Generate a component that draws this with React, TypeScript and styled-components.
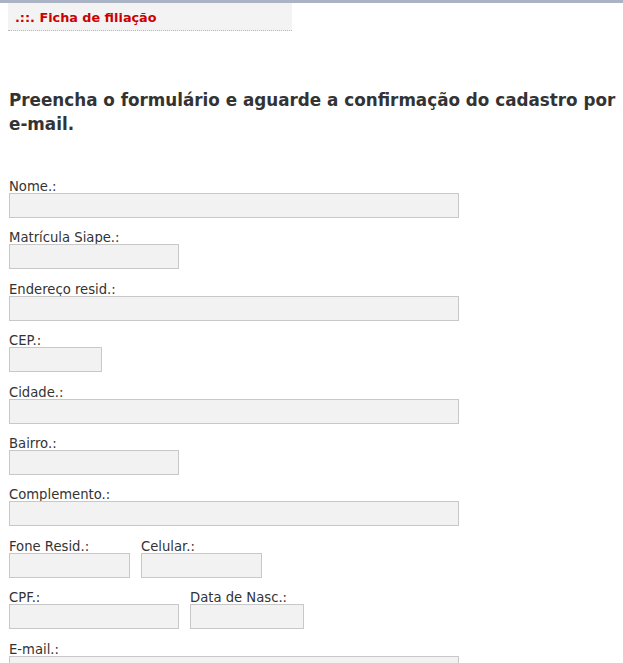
import styled, { createGlobalStyle } from "styled-components";

const GlobalStyle = createGlobalStyle`
  html, body {
    margin: 0;
    padding: 0;
    background: #ffffff;
  }
  body {
    font-family: "DejaVu Sans", Verdana, sans-serif;
    color: #333333;
  }
`;

const Page = styled.div`
  border-top: 3px solid #a9b3c4;
  padding: 0 0 0 8px;
`;

const TitleBox = styled.div`
  width: 284px;
  height: 28px;
  background-color: #f3f3f3;
  border-bottom: 1px dotted #b8b8b8;
  display: flex;
  align-items: center;
  padding-left: 7px;
  box-sizing: border-box;
`;

const Title = styled.span`
  color: #cc0000;
  font-weight: bold;
  font-size: 12.8px;
  margin-top: 1px;
`;

const Heading = styled.h2`
  margin: 57px 0 0 1px;
  font-size: 16.8px;
  font-weight: bold;
  line-height: 24px;
  color: #333333;
`;

const Form = styled.form`
  margin-top: 44px;
  padding-left: 1px;
  display: flex;
  flex-direction: column;
`;

const Row = styled.div`
  display: flex;
  gap: 11px;
  margin-bottom: 13.4px;
`;

const Field = styled.div`
  display: flex;
  flex-direction: column;
`;

const Label = styled.label`
  font-size: 13.2px;
  line-height: 14px;
  color: #333333;
  margin-bottom: -1px;
`;

const Input = styled.input<{ $w: number }>`
  width: ${(p) => p.$w}px;
  height: 25px;
  box-sizing: border-box;
  background-color: #f2f2f2;
  border: 1px solid #c8c8c8;
  margin: 0;
  padding: 2px 4px;
  font-family: inherit;
  font-size: 12px;
`;

const fields: { label: string; w: number }[][] = [
  [{ label: "Nome.:", w: 450 }],
  [{ label: "Matrícula Siape.:", w: 170 }],
  [{ label: "Endereço resid.:", w: 450 }],
  [{ label: "CEP.:", w: 93 }],
  [{ label: "Cidade.:", w: 450 }],
  [{ label: "Bairro.:", w: 170 }],
  [{ label: "Complemento.:", w: 450 }],
  [
    { label: "Fone Resid.:", w: 121 },
    { label: "Celular.:", w: 121 },
  ],
  [
    { label: "CPF.:", w: 170 },
    { label: "Data de Nasc.:", w: 114 },
  ],
  [{ label: "E-mail.:", w: 450 }],
];

function App() {
  return (
    <Page>
      <GlobalStyle />
      <TitleBox>
        <Title>.::. Ficha de filiação</Title>
      </TitleBox>
      <Heading>
        Preencha o formulário e aguarde a confirmação do cadastro por e-mail.
      </Heading>
      <Form>
        {fields.map((row, i) => (
          <Row key={i}>
            {row.map((f) => (
              <Field key={f.label}>
                <Label>{f.label}</Label>
                <Input type="text" $w={f.w} />
              </Field>
            ))}
          </Row>
        ))}
      </Form>
    </Page>
  );
}

export default App;
